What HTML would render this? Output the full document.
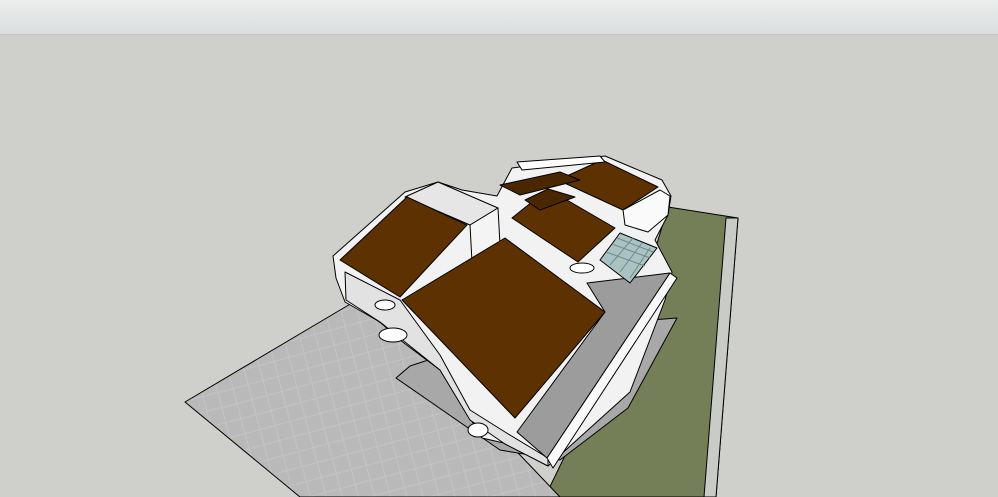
<!DOCTYPE html>
<html><head><meta charset="utf-8"><style>
html,body{margin:0;padding:0;width:998px;height:497px;overflow:hidden;background:#cfd0cc}
.bar{position:absolute;left:0;top:0;width:998px;height:34px;background:linear-gradient(#eceeee,#dcdfdf);border-bottom:1px solid #c4c6c4}
svg{position:absolute;left:0;top:0}
</style></head><body>
<div class="bar"></div>
<svg width="998" height="497" viewBox="0 0 998 497" stroke="#000" stroke-width="1" stroke-linejoin="round">
<defs>
<pattern id="tile" width="22" height="22" patternUnits="userSpaceOnUse" patternTransform="rotate(30)">
<rect width="22" height="22" fill="#b9b9b9" stroke="none"/>
<path d="M0 0L22 22M22 0L0 22" stroke="#c3c3c3" stroke-width="1"/>
</pattern>
</defs>
<!-- lawn -->
<polygon points="668,207 738,218 716,497 545,497 640,300" fill="#747f57"/>
<polygon points="726,218 738,218 716,497 704,497" fill="#c9ccc6"/>
<!-- paving -->
<polygon points="185,402 352,303 420,350 560,497 300,497" fill="url(#tile)"/>
<!-- slab -->
<polygon points="396,378 410,366 520,330 677,318 628,408 560,460 500,450" fill="#a8a8a8"/>
<!-- white building base -->
<polygon points="333,256 405,192 438,182 462,190 497,196 512,168 605,156 662,180 671,196 668,215 655,240 672,272 665,300 630,392 548,466 508,444 482,438 470,418 440,370 400,340 380,322 345,302 336,278" fill="#f2f2f2"/>
<polygon points="345,272 400,300 440,355 470,410 505,432 548,458 548,466 505,444 470,420 440,370 400,338 380,322 346,300" fill="#e2e2e2"/>
<!-- terrace -->
<polygon points="587,283 670,273 547,458 517,432 605,312" fill="#9c9c9c"/>
<polygon points="670,273 677,278 553,468 547,458" fill="#fafafa"/>
<!-- columns/balconies -->
<ellipse cx="478" cy="430" rx="10" ry="7" fill="#fff"/>
<ellipse cx="393" cy="335" rx="14" ry="7" fill="#fff"/>
<ellipse cx="385" cy="305" rx="10" ry="5" fill="#fff"/>
<ellipse cx="582" cy="268" rx="12" ry="5" fill="#fff"/>
<!-- light shaft box -->
<polygon points="405,197 438,182 498,208 470,225" fill="#e6e6e6"/>
<polygon points="470,225 498,208 500,245 472,262" fill="#f4f4f4"/>
<!-- roofs -->
<polygon points="340,260 407,197 467,225 400,297" fill="#5e3100"/>
<polygon points="402,300 505,238 605,312 515,418" fill="#5e3100"/>
<polygon points="512,218 548,189 615,228 578,262" fill="#5e3100"/>
<polygon points="558,180 602,160 658,187 623,210" fill="#5e3100"/>
<polygon points="500,185 560,172 580,180 520,195" fill="#4a2700"/>
<polygon points="525,200 548,189 575,197 540,210" fill="#4a2700"/>
<polygon points="517,162 600,156 605,162 522,170" fill="#fff"/>
<!-- glass canopy -->
<polygon points="600,260 620,233 657,248 630,283" fill="#aac3c2"/>
<path d="M606 252L645 266M612 244L650 258M617 238L653 252M610 265L633 238M620 272L642 243M630 278L650 248" stroke="#6e8a8a" stroke-width="1" fill="none"/>
<!-- right wing white -->
<polygon points="623,210 660,190 670,196 668,215 648,232 625,225" fill="#fafafa"/>
</svg>
</body></html>
